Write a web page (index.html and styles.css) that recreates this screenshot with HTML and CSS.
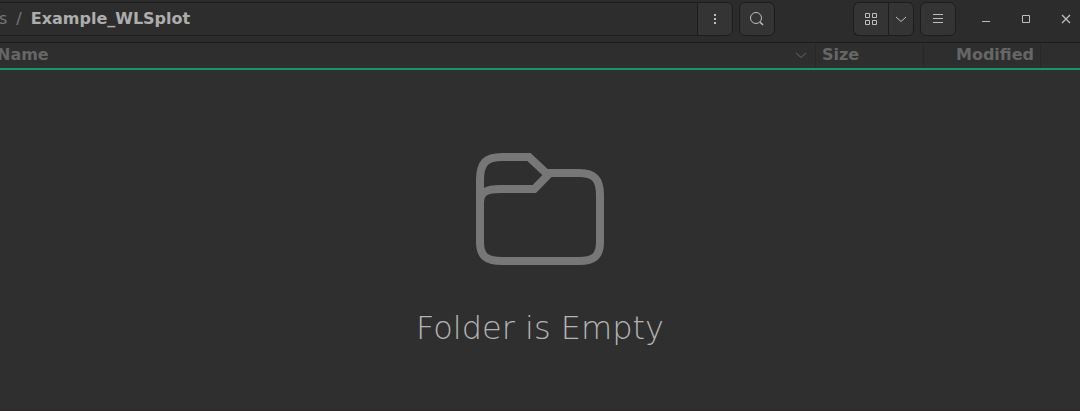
FILE: index.html
```html
<!DOCTYPE html>
<html lang="en">
<head>
<meta charset="utf-8">
<title>Example_WLSplot</title>
<link rel="stylesheet" href="styles.css">
</head>
<body>
<div class="window">
  <header class="headerbar">
    <nav class="pathbar" aria-label="Path">
      <div class="crumbs">
        <a class="crumb" href="#">s</a>
        <span class="slash">/</span>
        <a class="crumb current" href="#">Example_WLSplot</a>
      </div>
      <button class="btn path-menu" aria-label="Folder menu">
        <svg width="16" height="16" viewBox="0 0 16 16"><path fill="currentColor" d="M7 3h2v2H7zM7 7h2v2H7zM7 11h2v2H7z"/></svg>
      </button>
    </nav>
    <button class="btn search" aria-label="Search">
      <svg width="16" height="16" viewBox="0 0 16 16" fill="none" stroke="currentColor"><circle cx="7" cy="7" r="5.500"/><path stroke-width="1.500" d="M11 11l3 3"/></svg>
    </button>
    <div class="view-switch">
      <button class="btn view-grid" aria-label="Icon view">
        <svg width="16" height="16" viewBox="0 0 16 16" fill="none" stroke="currentColor"><path d="M2.500 2.500h4v4h-4zM9.500 2.500h4v4h-4zM2.500 9.500h4v4h-4zM9.500 9.500h4v4h-4z"/></svg>
      </button>
      <button class="btn view-options" aria-label="View options">
        <svg width="12" height="16" viewBox="0 0 12 16" fill="none" stroke="currentColor"><path d="M1 6l5 4.500L11 6"/></svg>
      </button>
    </div>
    <button class="btn" aria-label="Main menu">
      <svg width="16" height="16" viewBox="0 0 16 16" fill="none" stroke="currentColor"><path d="M3 3.500h10M3 7.500h10M3 11.500h10"/></svg>
    </button>
    <div class="controls">
      <button class="control" aria-label="Minimize">
        <svg width="16" height="16" viewBox="0 0 16 16" fill="none" stroke="currentColor"><path d="M4 10.500h8"/></svg>
      </button>
      <button class="control" aria-label="Maximize">
        <svg width="16" height="16" viewBox="0 0 16 16" fill="none" stroke="currentColor"><path d="M4.500 4.500h7v7h-7z"/></svg>
      </button>
      <button class="control" aria-label="Close">
        <svg width="16" height="16" viewBox="0 0 16 16" fill="none" stroke="currentColor" stroke-width="1.300"><path d="M4 4l8 8M12 4l-8 8"/></svg>
      </button>
    </div>
  </header>
  <table class="columns">
    <thead>
      <tr>
        <th class="col-name" scope="col" aria-sort="ascending">
          <div class="name-head">
            <span>Name</span>
            <svg width="12" height="16" viewBox="0 0 12 16" fill="none" stroke="currentColor"><path d="M1 6l5 4.500L11 6"/></svg>
          </div>
        </th>
        <th class="col-size" scope="col">Size</th>
        <th class="col-modified" scope="col">Modified</th>
        <td class="col-extra"></td>
      </tr>
    </thead>
  </table>
  <main class="empty">
    <svg width="128" height="128" viewBox="0 0 128 128" fill="none" stroke="currentColor" stroke-width="8">
      <path d="M4 97V35C4 18 10 12 26 12H53L70 28H103C118 28 124 34 124 50V97C124 111 118 116 103 116H26C10 116 4 111 4 97Z"/>
      <path d="M4 62V58C4 47 10 44 25 44H58.300L73 29"/>
    </svg>
    <h1 class="message">Folder is Empty</h1>
  </main>
</div>
</body>
</html>
```
FILE: styles.css
```css
* {
  box-sizing: border-box;
}

body {
  margin: 0;
  background: #2f2f2f;
  color: #b4b4b4;
  font-family: "DejaVu Sans", sans-serif;
  font-size: 16px;
}

svg {
  display: block;
  flex: none;
}

.window {
  display: flex;
  flex-direction: column;
  min-height: 100vh;
  overflow: hidden;
  border-bottom: 1px solid #2a2529;
}

.headerbar {
  display: flex;
  align-items: flex-start;
  padding: 2px 2px 6px 0;
  border-bottom: 1px solid #1d1d1d;
  background: #2c2c2c;
}

.pathbar {
  display: flex;
  flex: 1;
  margin-right: 6px;
}

.crumbs {
  display: flex;
  flex: 1;
  align-items: center;
  gap: 9px;
  margin-left: -1px;
  border: solid #1d1d1d;
  border-width: 1px 0;
  background: #2d2d2d;
  line-height: 32px;
}

.crumb,
.slash {
  color: #777;
  font-weight: 400;
  text-decoration: none;
}

.crumb.current {
  color: #adadad;
  font-weight: 700;
}

.btn {
  display: flex;
  align-items: center;
  justify-content: center;
  width: 36px;
  height: 34px;
  padding: 0;
  border: 1px solid #1d1d1d;
  border-radius: 6px;
  background: #343434;
  color: #bebebe;
}

.path-menu {
  border-radius: 0 6px 6px 0;
}

.view-switch {
  display: flex;
  margin: 0 6px 0 78px;
}

.view-grid {
  border-right: 0;
  border-radius: 6px 0 0 6px;
  width: 35px;
}

.view-options {
  width: 26px;
  border-radius: 0 6px 6px 0;
}

.controls {
  display: flex;
  gap: 16px;
  margin-left: 18px;
}

.control {
  display: flex;
  align-items: center;
  justify-content: center;
  width: 24px;
  height: 34px;
  padding: 0;
  border: 0;
  background: none;
  color: #bebebe;
}

.columns {
  width: 100%;
  table-layout: fixed;
  border-collapse: separate;
  border-spacing: 0;
  border-bottom: 2px solid #15966c;
  background: #2e2e2e;
  color: #666;
}

.columns th,
.columns td {
  height: 25px;
  padding: 0 6px;
  border-right: 1px solid #272727;
  font-weight: 700;
  line-height: 24px;
  text-align: left;
  vertical-align: top;
}

.columns .col-name {
  padding: 0 8px 0 0;
}

.name-head {
  display: flex;
  align-items: center;
  justify-content: space-between;
  margin-left: -3px;
}

.columns .col-size {
  width: 108px;
}

.columns .col-modified {
  width: 117px;
  text-align: right;
}

.columns .col-extra {
  width: 39px;
  border-right: 0;
}

.empty {
  display: flex;
  flex: 1;
  flex-direction: column;
  align-items: center;
  justify-content: center;
  gap: 36px;
  padding-top: 12px;
  color: #777;
}

.message {
  margin: 0;
  color: #b4b4b4;
  font-size: 32px;
  font-weight: 200;
  line-height: 38px;
}
```
